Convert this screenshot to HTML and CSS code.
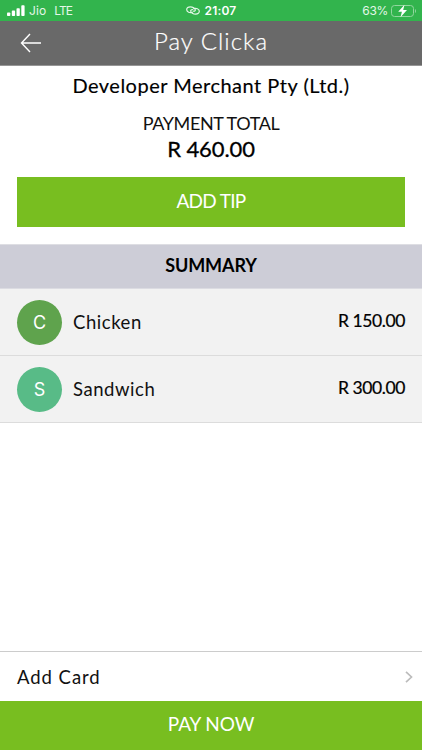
FILE: index.html
```html
<!DOCTYPE html>
<html lang="en">
<head>
<meta charset="utf-8">
<title>Pay Clicka</title>
<link rel="stylesheet" href="styles.css">
</head>
<body>
<div class="screen">
  <div class="status">
    <div class="status-left">
      <svg class="signal" width="18" height="12" viewBox="0 0 18 12" fill="#fff"><rect x="0" y="7.5" width="3.3" height="3.5" rx=".8"/><rect x="4.8" y="5.6" width="3.3" height="5.4" rx=".8"/><rect x="9.5" y="3.2" width="3.3" height="7.8" rx=".8"/><rect x="14.3" y="0.2" width="3.3" height="10.8" rx=".8"/></svg>
      <span class="carrier">Jio</span><span class="network">LTE</span>
    </div>
    <div class="status-mid">
      <svg class="link" width="14" height="9" viewBox="0 0 14 9" fill="none" stroke="#e4f7e8" stroke-width="1.2" stroke-linecap="round"><path d="M6.5 6.2C3.7 7.2.8 6 .7 3.8.6 1.9 2.3.8 4.3.8c2.4 0 5 1.5 5 3.2 0 .8-.8 1.3-1.7 1.2"/><path d="M7.5 2.7c2.8-1 5.700.2 5.800 2.400.1 1.900-1.600 3-3.600 3-2.400 0-5-1.500-5-3.200 0-.8.8-1.300 1.700-1.200"/></svg>
      <span class="time">21:07</span>
    </div>
    <div class="status-right">
      <span class="percent">63%</span>
      <svg class="battery" width="26" height="14" viewBox="0 0 26 14"><rect x=".5" y="1.5" width="22" height="11" rx="3" fill="none" stroke="#92d69f"/><path d="M24 5v4c1.400-.5 1.400-3.500 0-4z" fill="#92d69f"/><path d="M13.500.8 7.200 7.800h3.700L9.500 13.300l6.500-7.200h-3.800z" fill="#fff"/></svg>
    </div>
  </div>
  <header class="nav">
    <svg class="back" width="22" height="20" viewBox="0 0 22 20" fill="none" stroke="#fff" stroke-width="1.4"><path d="M21 10H1.500M10 1 1.500 10l8.500 9"/></svg>
    <h1 class="nav-title">Pay Clicka</h1>
  </header>
  <section class="payment">
    <h2 class="merchant">Developer Merchant Pty (Ltd.)</h2>
    <p class="label">PAYMENT TOTAL</p>
    <p class="total">R 460.00</p>
    <button class="tip">ADD TIP</button>
  </section>
  <h3 class="summary">SUMMARY</h3>
  <div class="item"><span class="avatar avatar-c">C</span><span class="name">Chicken</span><span class="price">R 150.00</span></div>
  <div class="item"><span class="avatar avatar-s">S</span><span class="name">Sandwich</span><span class="price">R 300.00</span></div>
  <div class="card"><span class="card-text">Add Card</span><svg class="chevron" width="8" height="12" viewBox="0 0 8 12" fill="none" stroke="#bcbcbc" stroke-width="1.7"><path d="M1 .8 6.500 6 1 11.200"/></svg></div>
  <button class="pay">PAY NOW</button>
</div>
</body>
</html>
```
FILE: styles.css
```css
* { box-sizing: border-box; }
body { margin: 0; font-family: Lato, sans-serif; color: #111; }
h1, h2, h3, p { margin: 0; font-weight: 400; }
button { border: 0; padding: 0; font-family: inherit; color: #fff; background: #78be20; }
.screen { width: 422px; height: 750px; display: flex; flex-direction: column; background: #fff; overflow: hidden; white-space: nowrap; }
.status { height: 21px; flex: none; display: grid; grid-template-columns: 1fr 1fr 1fr; align-items: center; background: #32b44d; color: #e4f7e8; font: 12px/21px Inter, sans-serif; }
.status-left { display: flex; align-items: center; padding-left: 7px; }
.carrier { margin-left: 4px; letter-spacing: .1px; }
.network { margin-left: 8px; letter-spacing: -.9px; }
.status-mid { display: flex; justify-content: center; align-items: center; gap: 5px; }
.time { font-weight: 600; letter-spacing: .2px; color: #fff; }
.status-right { display: flex; justify-content: flex-end; align-items: center; gap: 3px; padding-right: 5px; }
.percent { letter-spacing: -.3px; }
.nav { height: 45px; flex: none; display: grid; grid-template-columns: 42px 1fr 42px; align-items: center; background: #696969; border-bottom: 1px solid #969696; color: #fff; }
.back { margin-left: 20px; }
.nav-title { text-align: center; font-size: 24px; line-height: 40px; padding-bottom: 4px; letter-spacing: 1px; font-weight: 300; -webkit-text-stroke: .2px #fff; }
.payment { height: 178px; flex: none; display: flex; flex-direction: column; align-items: center; padding: 5px 17px 0; }
.merchant { font-size: 20px; line-height: 28px; letter-spacing: .5px; color: #000; -webkit-text-stroke: .15px #000; }
.label { margin-top: 12px; font-size: 18px; line-height: 24px; letter-spacing: -.4px; }
.total { font-size: 22px; line-height: 27px; letter-spacing: -.1px; color: #000; -webkit-text-stroke: .3px #000; }
.tip { width: 100%; height: 50px; margin-top: 15px; padding-bottom: 2px; font-size: 19px; line-height: 48px; letter-spacing: -.7px; }
.summary { height: 45px; flex: none; background: #cdcdd7; border-top: 1px solid #dedee3; border-bottom: 1px solid #dcdce2; text-align: center; font-size: 18px; line-height: 41px; letter-spacing: -.1px; font-weight: 700; color: #000; }
.item { height: 67px; flex: none; display: flex; align-items: center; padding: 0 17px; background: #f2f2f2; border-bottom: 1px solid #dcdcdc; }
.avatar { width: 45px; height: 45px; border-radius: 50%; color: #fff; text-align: center; font: 18px/46px Inter, sans-serif; }
.avatar-c { background: #5fa34d; }
.avatar-s { background: #58bb87; }
.name { margin-left: 11px; font-size: 18.5px; line-height: 26px; letter-spacing: .55px; }
.price { margin-left: auto; font-size: 17.5px; line-height: 26px; letter-spacing: -.4px; padding-bottom: 3px; color: #000; -webkit-text-stroke: .2px #000; }
.card { height: 50px; flex: none; margin-top: auto; display: flex; align-items: center; justify-content: space-between; padding: 0 9px 0 17px; border-top: 1px solid #ccc; }
.card-text { font-size: 18.5px; letter-spacing: .95px; }
.pay { height: 49px; flex: none; padding-bottom: 3px; font-size: 19px; line-height: 46px; letter-spacing: -.1px; }
```
